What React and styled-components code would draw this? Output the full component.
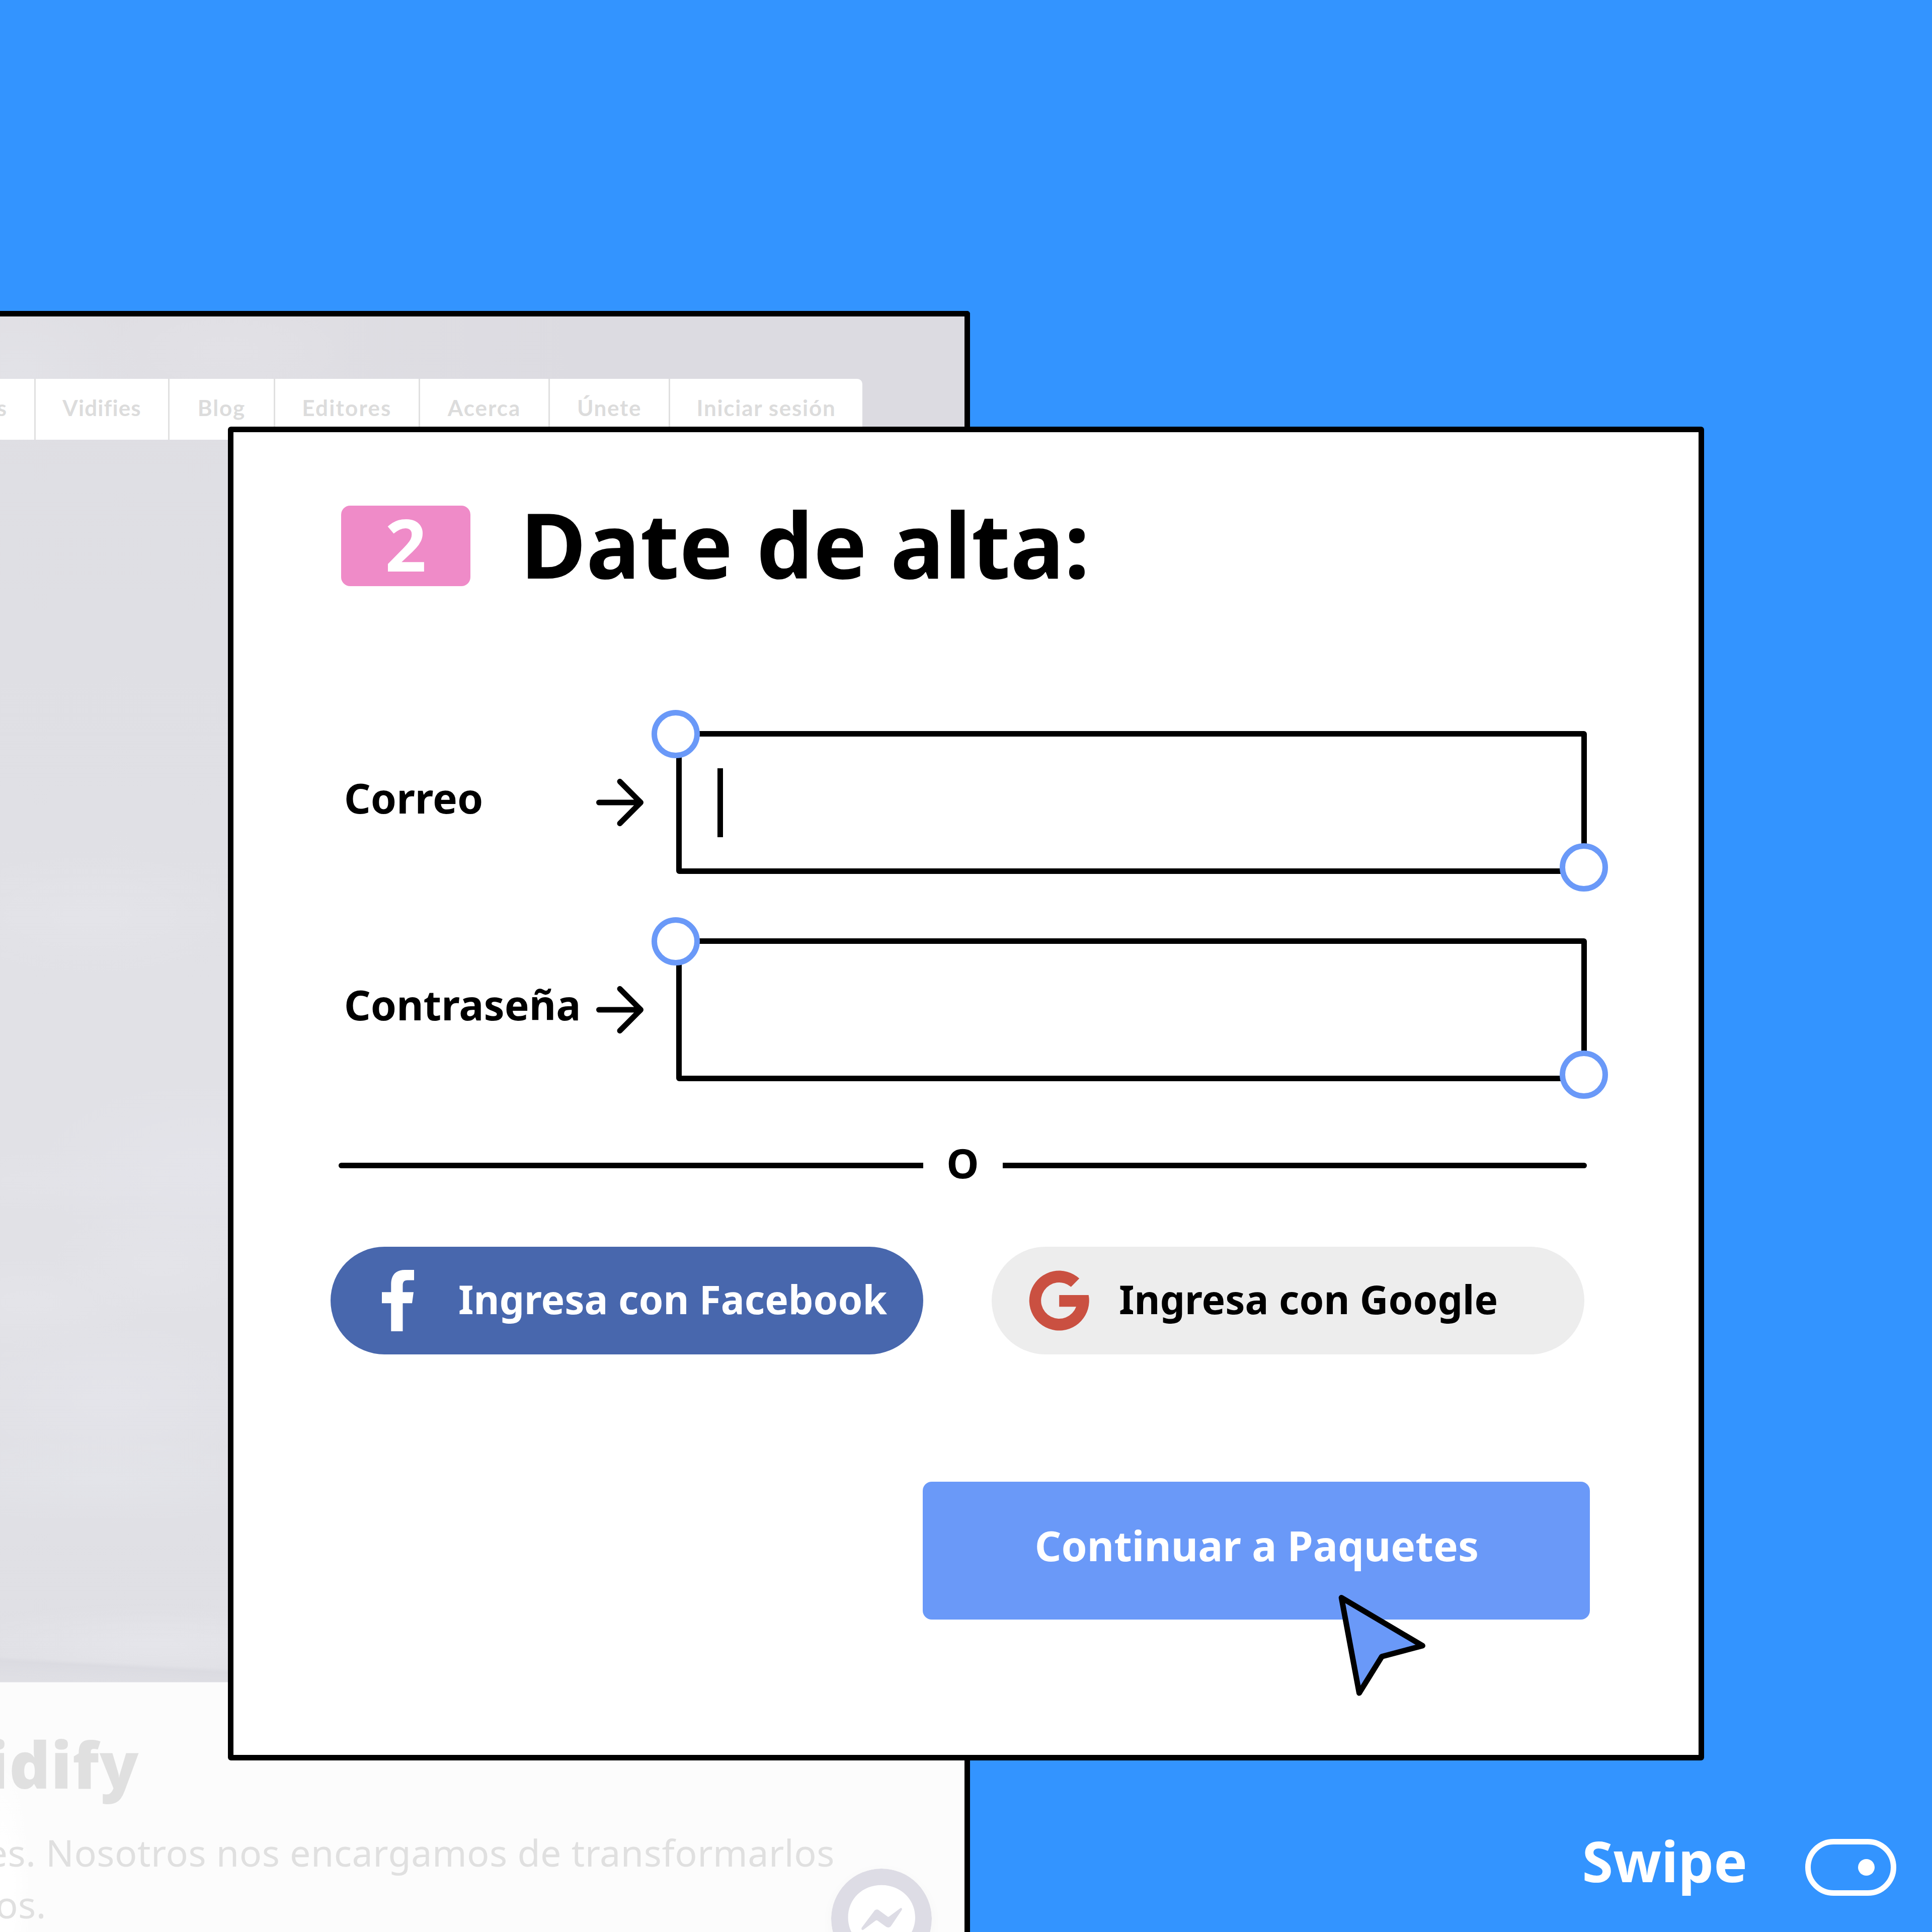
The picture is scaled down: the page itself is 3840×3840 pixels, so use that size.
import styled, { createGlobalStyle } from 'styled-components'

const GlobalStyle = createGlobalStyle`
  * {
    box-sizing: border-box;
  }

  body {
    margin: 0;
    background: #3394ff;
    font-family: 'Noto Sans', sans-serif;
  }
`

const Canvas = styled.main`
  position: relative;
  width: 3840px;
  height: 3840px;
  overflow: hidden;
  background: #3394ff;
  color: #000;
`

/* Landing page window, in the back */

const SiteWindow = styled.section`
  position: absolute;
  top: 618px;
  left: 0;
  width: 1928px;
  height: 3222px;
  overflow: hidden;
  border: solid #000;
  border-width: 11px 11px 0 0;
  border-top-right-radius: 6px;
  background: #fcfcfc;
`

const Hero = styled.header`
  height: 2715px;
  padding: 124px 203px 0 0;
  border-bottom: 1px solid #ececf0;
  background:
    linear-gradient(183deg, transparent 98.2%, #dbdbe1 98.5%, transparent 99.7%),
    radial-gradient(ellipse 260px 110px at 450px 70px, #e2e1e6, transparent),
    radial-gradient(ellipse 240px 160px at 40px 100px, #e2e2e7, transparent),
    radial-gradient(ellipse 300px 120px at 180px 1190px, #e4e4e9, transparent),
    radial-gradient(ellipse 330px 180px at 400px 1700px, #e4e4ea, transparent),
    radial-gradient(ellipse 260px 60px at 100px 1720px, #e3e3e8, transparent),
    radial-gradient(ellipse 220px 110px at 320px 1880px, #e4e4e9, transparent),
    radial-gradient(ellipse 240px 90px at 60px 1960px, #e4e4e9, transparent),
    radial-gradient(ellipse 300px 150px at 220px 2150px, #e4e4ea, transparent),
    radial-gradient(ellipse 360px 90px at 200px 2310px, #e3e4e9, transparent),
    radial-gradient(ellipse 420px 80px at 300px 2640px, #e5e5ea, transparent),
    linear-gradient(90deg, transparent 30%, #dcdbe1 60%),
    linear-gradient(#dfdee3, #dfdfe4 25%, #e1e1e6 50%, #e1e1e6 75%, #dfdfe4);
`

const Nav = styled.nav`
  display: flex;
  justify-content: flex-end;
  height: 121px;
  margin-left: -200px;
  overflow: hidden;
  border-top-right-radius: 10px;
  background: #fff;
`

const NavItem = styled.a`
  display: flex;
  flex: none;
  align-items: center;
  justify-content: ${({ $end }) => ($end ? 'flex-end' : 'center')};
  width: ${({ $width }) => $width}px;
  padding: 0 ${({ $end }) => ($end ? 55 : 0)}px 8px 0;
  border-left: 3px solid #e0e0e0;
  color: #dcdcdc;
  font: 700 44px/1 Lato, sans-serif;
  letter-spacing: ${({ $spacing }) => $spacing}px;
`

const Copy = styled.div`
  height: 496px;
  padding-top: 87px;
  background: radial-gradient(ellipse 60px 260px at 0 420px, #fff 40%, #fcfcfc);
  color: #e0e0e0;
`

const CopyTitle = styled.h2`
  display: flex;
  justify-content: flex-end;
  width: 277px;
  margin: 0 0 49px;
  font-size: 127px;
  font-weight: 900;
  line-height: 150px;
  letter-spacing: 1.5px;
`

const CopyLine = styled.p`
  display: flex;
  justify-content: flex-end;
  width: ${({ $width }) => $width}px;
  margin: 0;
  font-size: 73.5px;
  line-height: 103px;
  letter-spacing: 0.5px;
  white-space: pre;
`

const ChatBadge = styled.svg`
  position: absolute;
  left: 1652px;
  top: 3085px;
  width: 200px;
  height: 200px;
  border-radius: 50%;
  box-shadow: 0 6px 24px rgba(0, 0, 0, 0.03);
`

/* Sign up card */

const Card = styled.section`
  position: absolute;
  left: 453px;
  top: 848px;
  width: 2934px;
  height: 2651px;
  display: flex;
  flex-direction: column;
  align-items: flex-start;
  padding: 146px 0 0 193px;
  border: 11px solid #000;
  border-radius: 6px;
  background: #fff;
`

const CardHeader = styled.header`
  display: flex;
  gap: 99px;
  height: 160px;
  margin-left: 21px;
`

const Step = styled.span`
  width: 257px;
  height: 160px;
  border-radius: 18px;
  background: #ef8bc8;
  color: #fff;
  font-size: 144px;
  font-weight: 700;
  line-height: 150px;
  text-align: center;
`

const Title = styled.h1`
  margin: 0;
  font-size: 179px;
  font-weight: 700;
  line-height: 151px;
  white-space: nowrap;
`

const Form = styled.form`
  display: flex;
  flex-direction: column;
  gap: 127.5px;
  margin: 288px 0 0 27px;
`

const Row = styled.label`
  display: flex;
  align-items: center;
  height: 284px;
`

const RowLabel = styled.span`
  width: 500px;
  padding-bottom: 20px;
  font-size: 82.2px;
  font-weight: 700;
  line-height: 1;
`

const ArrowIcon = styled.svg`
  width: 96px;
  height: 96px;
  margin-right: 64px;
`

const Field = styled.div`
  position: relative;
  width: 1810px;
  height: 284px;
  padding: 63px 71px;
  border: 11px solid #000;
  border-radius: 6px;
`

const Caret = styled.div`
  width: 11px;
  height: 137px;
  background: #000;
`

const Handle = styled.i`
  position: absolute;
  ${({ $corner }) => ($corner === 'start' ? 'left: -60px; top: -53px;' : 'right: -53px; bottom: -46px;')}
  width: 96px;
  height: 96px;
  border: 11px solid #6a99f8;
  border-radius: 50%;
  background: #fff;
`

const Divider = styled.div`
  display: flex;
  align-items: center;
  width: 2481px;
  height: 84px;
  margin: 126px 0 119px 16px;
`

const Rule = styled.span`
  flex: 1;
  height: 11px;
  background: #000;
  border-radius: ${({ $side }) => ($side === 'left' ? '6px 0 0 6px' : '0 6px 6px 0')};
`

const Or = styled.span`
  width: 158px;
  padding-bottom: 12px;
  font-size: 81.5px;
  font-weight: 700;
  line-height: 1;
  text-align: center;
`

const SocialRow = styled.div`
  display: flex;
  gap: 136px;
`

const SocialButton = styled.div`
  display: flex;
  align-items: center;
  gap: ${({ $gap }) => $gap}px;
  width: 1178px;
  height: 214px;
  padding-left: ${({ $inset }) => $inset}px;
  border-radius: 107px;
  background: ${({ $bg }) => $bg};
  color: ${({ $color }) => $color};
`

const SocialText = styled.span`
  padding-bottom: 4px;
  font-size: 78.4px;
  font-weight: 700;
  line-height: 1;
  white-space: nowrap;
`

const Continue = styled.div`
  display: flex;
  align-items: center;
  justify-content: center;
  width: 1326px;
  height: 274px;
  margin: 253px 0 0 1177px;
  padding: 0 0 20px 2px;
  border-radius: 18px;
  background: #6a99f8;
  color: #fff;
  font-size: 82.1px;
  font-weight: 700;
  line-height: 1;
`

const Cursor = styled.svg`
  position: absolute;
  left: 2650px;
  top: 3160px;
  width: 200px;
  height: 220px;
`

/* Swipe hint in the bottom corner */

const Swipe = styled.footer`
  position: absolute;
  right: 71px;
  bottom: 72px;
  display: flex;
  align-items: center;
  gap: 115px;
  height: 113px;
  color: #fff;
`

const SwipeText = styled.span`
  padding-bottom: 27px;
  font-size: 111.9px;
  font-weight: 700;
  line-height: 1;
`

const Toggle = styled.span`
  display: flex;
  align-items: center;
  justify-content: flex-end;
  width: 181px;
  height: 113px;
  padding-right: 32px;
  border: 11px solid #fff;
  border-radius: 57px;

  &::after {
    content: '';
    width: 33px;
    height: 33px;
    border-radius: 50%;
    background: #fff;
  }
`

const navItems = [
  { label: 'Vidifies', width: 266, spacing: 1.1 },
  { label: 'Blog', width: 210, spacing: 1.9 },
  { label: 'Editores', width: 288, spacing: 2.2 },
  { label: 'Acerca', width: 258, spacing: 2 },
  { label: 'Únete', width: 239, spacing: 1.7 },
  { label: 'Iniciar sesión', width: 385, spacing: 1.7 },
]

const Arrow = () => (
  <ArrowIcon viewBox='0 0 96 96' fill='none' stroke='#000' strokeWidth='11' strokeLinecap='round' strokeLinejoin='round'>
    <path d='M6.5 48h83M48 6.3L89.5 48 48 89.7' />
  </ArrowIcon>
)

const FacebookIcon = () => (
  <svg width='64' height='122' viewBox='0 0 64 122' fill='#fff'>
    <path d='M41.5 122V66.3H60l3-22H41.5V31c0-6.800 2.200-10.500 9.500-10.500h13V0H46C27 0 18.300 11 18.300 28.500v15.800H0v22h18.300V122z' />
  </svg>
)

const GoogleIcon = () => (
  <svg width='118' height='120' viewBox='0 0 118 120' fill='#ca5041' overflow='visible'>
    <path d='M99.200 16A59.500 59.500 0 1 0 117.700 49H59.200V72.300H93A36 36 0 1 1 82.700 32.700z' />
  </svg>
)

export default function App() {
  return (
    <>
      <GlobalStyle />
      <Canvas>
        <SiteWindow>
          <Hero>
            <Nav>
              <NavItem $width={268} $spacing={0} $end>
                s
              </NavItem>
              {navItems.map(({ label, width, spacing }) => (
                <NavItem key={label} $width={width} $spacing={spacing}>
                  {label}
                </NavItem>
              ))}
            </Nav>
          </Hero>
          <Copy>
            <CopyTitle>idify</CopyTitle>
            <CopyLine $width={1659}>es. Nosotros nos encargamos de transformarlos</CopyLine>
            <CopyLine $width={92}>os.</CopyLine>
          </Copy>
          <ChatBadge viewBox='0 0 200 200'>
            <circle cx='100' cy='100' r='100' fill='#dddce5' />
            <path fill='#fff' d='M100 32.700C62.500 32.700 33.600 60 33.600 97c0 19.500 8 36 21 47.500V168l21-11.500c7.500 2.500 16 4 24.400 4 37.500 0 67-27 67-63.500S137.500 32.700 100 32.700z' />
            <path fill='#dddce5' d='M61 117l24-32c2.500-4 6.500-4.800 10-2.300l17 12.500c1 .8 2.200.8 3.200 0l21.500-16c3.200-2.300 5.300.5 3.300 3.600l-20.500 30.500c-2.500 4-6.800 4.800-10.500 2.300l-17-12.300c-1.100-.8-2.400-.8-3.500 0l-24 18c-3.200 2.200-5.500-.8-3.500-4.300z' />
          </ChatBadge>
        </SiteWindow>

        <Card>
          <CardHeader>
            <Step>2</Step>
            <Title>Date de alta:</Title>
          </CardHeader>
          <Form>
            <Row>
              <RowLabel>Correo</RowLabel>
              <Arrow />
              <Field>
                <Caret />
                <Handle $corner='start' />
                <Handle $corner='end' />
              </Field>
            </Row>
            <Row>
              <RowLabel>Contraseña</RowLabel>
              <Arrow />
              <Field>
                <Handle $corner='start' />
                <Handle $corner='end' />
              </Field>
            </Row>
          </Form>
          <Divider>
            <Rule $side='left' />
            <Or>O</Or>
            <Rule $side='right' />
          </Divider>
          <SocialRow>
            <SocialButton $bg='#4867ad' $color='#fff' $inset={102} $gap={88}>
              <FacebookIcon />
              <SocialText>Ingresa con Facebook</SocialText>
            </SocialButton>
            <SocialButton $bg='#ededed' $color='#000' $inset={75} $gap={60}>
              <GoogleIcon />
              <SocialText>Ingresa con Google</SocialText>
            </SocialButton>
          </SocialRow>
          <Continue>Continuar a Paquetes</Continue>
        </Card>

        <Cursor viewBox='0 0 200 220'>
          <path
            d='M16.200 15.500L177.500 111l-81 21.500-45 72.500z'
            fill='#6a99f8'
            stroke='#000'
            strokeWidth='11'
            strokeLinejoin='round'
          />
        </Cursor>

        <Swipe>
          <SwipeText>Swipe</SwipeText>
          <Toggle />
        </Swipe>
      </Canvas>
    </>
  )
}
